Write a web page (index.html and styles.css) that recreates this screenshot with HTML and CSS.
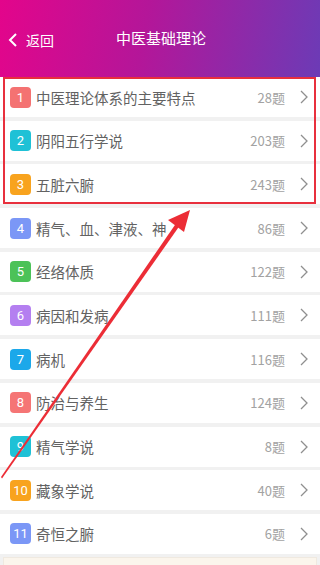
FILE: index.html
```html
<!DOCTYPE html>
<html lang="zh">
<head>
<meta charset="utf-8">
<link rel="stylesheet" href="styles.css">
</head>
<body>
<div class="page">
  <header class="bar">
    <div class="back">
      <svg class="back-ico" width="10" height="16" viewBox="0 0 10 16"><path d="M8 2 L2 8 L8 14" fill="none" stroke="#fff" stroke-width="2"/></svg>
      <span>返回</span>
    </div>
    <div class="title">中医基础理论</div>
  </header>
  <ul class="list">
    <li class="row"><span class="num c1">1</span><span class="name">中医理论体系的主要特点</span><span class="count">28题</span><svg class="chev" width="8" height="14" viewBox="0 0 8 14"><path d="M1 1 L7 7 L1 13" fill="none" stroke="#8f8f8f" stroke-width="1.3"/></svg></li>
    <li class="row"><span class="num c2">2</span><span class="name">阴阳五行学说</span><span class="count">203题</span><svg class="chev" width="8" height="14" viewBox="0 0 8 14"><path d="M1 1 L7 7 L1 13" fill="none" stroke="#8f8f8f" stroke-width="1.3"/></svg></li>
    <li class="row"><span class="num c3">3</span><span class="name">五脏六腑</span><span class="count">243题</span><svg class="chev" width="8" height="14" viewBox="0 0 8 14"><path d="M1 1 L7 7 L1 13" fill="none" stroke="#8f8f8f" stroke-width="1.3"/></svg></li>
    <li class="row"><span class="num c4">4</span><span class="name">精气、血、津液、神</span><span class="count">86题</span><svg class="chev" width="8" height="14" viewBox="0 0 8 14"><path d="M1 1 L7 7 L1 13" fill="none" stroke="#8f8f8f" stroke-width="1.3"/></svg></li>
    <li class="row"><span class="num c5">5</span><span class="name">经络体质</span><span class="count">122题</span><svg class="chev" width="8" height="14" viewBox="0 0 8 14"><path d="M1 1 L7 7 L1 13" fill="none" stroke="#8f8f8f" stroke-width="1.3"/></svg></li>
    <li class="row"><span class="num c6">6</span><span class="name">病因和发病</span><span class="count">111题</span><svg class="chev" width="8" height="14" viewBox="0 0 8 14"><path d="M1 1 L7 7 L1 13" fill="none" stroke="#8f8f8f" stroke-width="1.3"/></svg></li>
    <li class="row"><span class="num c7">7</span><span class="name">病机</span><span class="count">116题</span><svg class="chev" width="8" height="14" viewBox="0 0 8 14"><path d="M1 1 L7 7 L1 13" fill="none" stroke="#8f8f8f" stroke-width="1.3"/></svg></li>
    <li class="row"><span class="num c8">8</span><span class="name">防治与养生</span><span class="count">124题</span><svg class="chev" width="8" height="14" viewBox="0 0 8 14"><path d="M1 1 L7 7 L1 13" fill="none" stroke="#8f8f8f" stroke-width="1.3"/></svg></li>
    <li class="row"><span class="num c9">9</span><span class="name">精气学说</span><span class="count">8题</span><svg class="chev" width="8" height="14" viewBox="0 0 8 14"><path d="M1 1 L7 7 L1 13" fill="none" stroke="#8f8f8f" stroke-width="1.3"/></svg></li>
    <li class="row"><span class="num c10">10</span><span class="name">藏象学说</span><span class="count">40题</span><svg class="chev" width="8" height="14" viewBox="0 0 8 14"><path d="M1 1 L7 7 L1 13" fill="none" stroke="#8f8f8f" stroke-width="1.3"/></svg></li>
    <li class="row"><span class="num c11">11</span><span class="name">奇恒之腑</span><span class="count">6题</span><svg class="chev" width="8" height="14" viewBox="0 0 8 14"><path d="M1 1 L7 7 L1 13" fill="none" stroke="#8f8f8f" stroke-width="1.3"/></svg></li>
  </ul>
  <div class="foot"></div>
  <div class="highlight"></div>
  <svg class="arrow" width="320" height="565" viewBox="0 0 320 565">
    <path d="M1 477 L177 222 L180.5 224.5 L2 478.5 Z" fill="#ec2d36"/>
    <path d="M190 210 L168 220 L184 232 Z" fill="#ec2d36"/>
  </svg>
</div>
</body>
</html>
```
FILE: styles.css
```css
* { box-sizing: border-box; }
html, body { margin: 0; padding: 0; }
body {
  width: 320px;
  height: 565px;
  overflow: hidden;
  background: #f1f1f1;
  font-family: "Noto Sans CJK SC", "Noto Sans", sans-serif;
}
.page { position: relative; width: 320px; height: 565px; }
.bar {
  height: 77px;
  background: linear-gradient(100deg, #e3058b 0%, #b41699 45%, #6c3bb6 100%);
  display: flex;
  align-items: center;
  position: relative;
  color: #fff;
  padding-top: 2px;
}
.back {
  display: flex;
  align-items: center;
  gap: 8px;
  padding-left: 8px;
  font-size: 14px;
  z-index: 1;
}
.title {
  position: absolute;
  left: 0; right: 0;
  text-align: center;
  font-size: 15px;
  top: 28px;
  line-height: 20px;
  padding-left: 2px;
}
.list { list-style: none; margin: 0; padding: 0; display: flex; flex-direction: column; gap: 3.7px; }
.row {
  height: 40px;
  background: #fff;
  display: flex;
  align-items: center;
  padding-left: 10px;
  padding-right: 10px;
}
.num {
  width: 21px; height: 21px;
  border-radius: 4px;
  color: #fff;
  font-size: 13px;
  display: flex; align-items: center; justify-content: center;
  font-family: "Roboto", "Noto Sans", sans-serif;
  flex-shrink: 0;
}
.c1 { background: #f47272; }
.c2 { background: #1fc1d6; }
.c3 { background: #f8a31e; }
.c4 { background: #7b97f6; }
.c5 { background: #4cc258; }
.c6 { background: #b47ff0; }
.c7 { background: #1ba8ea; }
.c8 { background: #f57575; }
.c9 { background: #1fc1d6; }
.c10 { background: #f8a31e; }
.c11 { background: #7b97f6; }
.name { margin-left: 5px; font-size: 14.5px; color: #626262; flex: 1; white-space: nowrap; }
.count { font-size: 13px; color: #a2a2a2; margin-right: 15px; }
.chev { flex-shrink: 0; margin-right: 2px; }
.foot {
  margin: 3px 3px 0;
  height: 20px;
  background: #fbf5ec;
  border: 1px solid #efe9e0;
}
.highlight {
  position: absolute;
  left: 3px; top: 77px;
  width: 313px; height: 127px;
  border: 2px solid #e8303d;
}
.arrow { position: absolute; left: 0; top: 0; pointer-events: none; }
```
